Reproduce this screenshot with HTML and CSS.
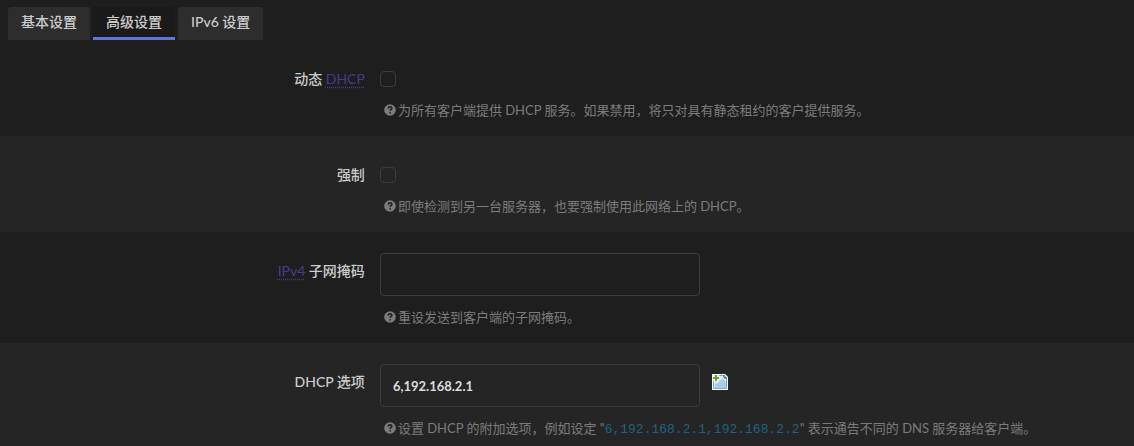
FILE: index.html
```html
<!DOCTYPE html>
<html lang="zh-Hans">
<head>
  <meta charset="UTF-8" />
  <meta name="viewport" content="width=device-width, initial-scale=1.0" />
  <title>DHCP 服务器</title>
  <link rel="stylesheet" href="styles.css">
</head>
<body>
  <svg class="sprite" aria-hidden="true">
    <symbol id="help" viewBox="0 0 12 12">
      <circle cx="6" cy="6" r="5.8" fill="currentColor" />
      <path class="help-mark" d="M4.2 4.6C4.3 3.4 5 2.9 6 2.9s1.8.6 1.8 1.5c0 1.2-1.7 1.2-1.7 2.5" />
      <circle class="help-dot" cx="6.1" cy="8.8" r=".9" />
    </symbol>
  </svg>

  <nav class="tabs">
    <button class="tab" type="button">基本设置</button>
    <button class="tab active" type="button">高级设置</button>
    <button class="tab" type="button">IPv6 设置</button>
  </nav>

  <form class="settings">
    <div class="row">
      <label class="title" for="dynamic">动态 <abbr title="动态主机配置协议">DHCP</abbr></label>
      <div class="field">
        <input class="check" type="checkbox" id="dynamic">
        <div class="description"><svg class="icon"><use href="#help" /></svg>为所有客户端提供 DHCP 服务。如果禁用，将只对具有静态租约的客户提供服务。</div>
      </div>
    </div>

    <div class="row">
      <label class="title" for="force">强制</label>
      <div class="field">
        <input class="check" type="checkbox" id="force">
        <div class="description"><svg class="icon"><use href="#help" /></svg>即使检测到另一台服务器，也要强制使用此网络上的 DHCP。</div>
      </div>
    </div>

    <div class="row">
      <label class="title" for="netmask"><abbr title="互联网协议第4版">IPv4</abbr> 子网掩码</label>
      <div class="field">
        <input class="text" type="text" id="netmask">
        <div class="description"><svg class="icon"><use href="#help" /></svg>重设发送到客户端的子网掩码。</div>
      </div>
    </div>

    <div class="row">
      <label class="title" for="options">DHCP 选项</label>
      <div class="field">
        <div class="dynlist">
          <input class="text" type="text" id="options" value="6,192.168.2.1">
          <button class="add" type="button" aria-label="添加">
            <svg viewBox="0 0 16 16" width="16" height="16">
              <path d="M0 0h13l3 3v13H0z" fill="#fff" />
              <path d="M1.5 1.5h11l2 2v11h-13z" fill="#dceafa" stroke="#7ea3d0" />
              <path d="M3 14v-4l3-1 2-3 3-1 3 3v6z" fill="#a9cbee" />
              <path d="M12 1v3h3" fill="none" stroke="#3d4c66" />
              <path d="M1 1h6v6H1z" fill="#f4f9ea" />
              <path d="M4 1v6M1 4h6" fill="none" stroke="#6f9f2c" stroke-width="2" />
            </svg>
          </button>
        </div>
        <div class="description"><svg class="icon"><use href="#help" /></svg>设置 DHCP 的附加选项，例如设定 "<code>6,192.168.2.1,192.168.2.2</code>" 表示通告不同的 DNS 服务器给客户端。</div>
      </div>
    </div>
  </form>
</body>
</html>
```
FILE: styles.css
```css
* {
  box-sizing: border-box;
}
body {
  margin: 0;
  background-color: #1e1e1e;
  color: #ccc;
  font-family: Lato, 'Noto Sans CJK SC', sans-serif;
  font-size: 14px;
  line-height: 20px;
}
.sprite {
  display: none;
}
.tabs {
  display: flex;
  gap: 3px;
  padding: 7px 8px 0;
}
.tab {
  height: 33px;
  padding: 0 13px;
  border: none;
  border-bottom: 3px solid #2d2d2d;
  border-radius: 3px 3px 0 0;
  background-color: #2d2d2d;
  color: #ccc;
  font: inherit;
  font-weight: 500;
  cursor: pointer;
}
.tab.active {
  border-bottom-color: #6272dc;
  border-radius: 0;
  background-color: #1a1a1a;
}
.row {
  display: flex;
  padding: 21px 0 16px;
}
.row:nth-child(even) {
  background-color: #252525;
}
.title {
  flex: 0 0 33.5%;
  padding: 8px 15px 0 0;
  font-weight: 500;
  text-align: right;
}
.title abbr {
  color: #483d8b;
  font-weight: 400;
  text-decoration: underline dotted;
  text-underline-offset: 3px;
}
.field {
  flex: 1;
}
.check {
  appearance: none;
  display: block;
  width: 16px;
  height: 16px;
  margin: 10px 0 13px;
  border: 1px solid #3c3c3c;
  border-radius: 4px;
  background: transparent;
}
.text {
  display: block;
  width: 320px;
  max-width: 100%;
  height: 43px;
  padding: 0 12px;
  border: 1px solid #3c3c3c;
  border-radius: 4px;
  background: transparent;
  color: #ddd;
  font: inherit;
  font-size: 13px;
  font-weight: 700;
}
.dynlist {
  display: flex;
  gap: 12px;
}
.add {
  width: 16px;
  height: 16px;
  margin-top: 10px;
  padding: 0;
  border: none;
  background: none;
  cursor: pointer;
}
.add svg {
  display: block;
}
.description {
  padding-left: 4px;
  color: #7c7c7c;
  font-size: 13px;
}
.text + .description,
.dynlist + .description {
  margin-top: 11px;
}
.icon {
  width: 12px;
  height: 12px;
  margin-right: 2px;
  vertical-align: -1px;
}
.help-mark {
  fill: none;
  stroke: #222;
  stroke-width: 1.6;
}
.help-dot {
  fill: #222;
}
code {
  color: #1c6484;
  font-family: 'Liberation Mono', monospace;
  font-size: 13px;
}
```
